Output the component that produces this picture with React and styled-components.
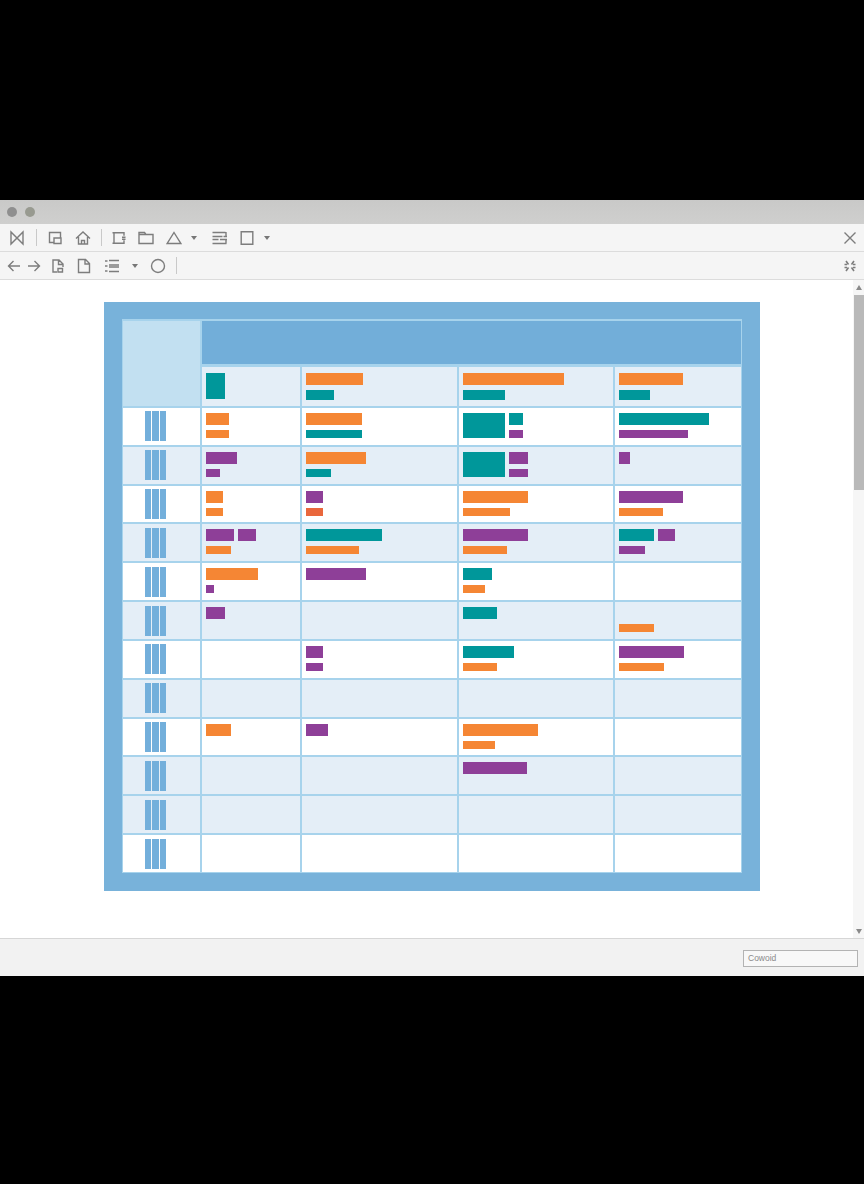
import React from "react";
import styled, { createGlobalStyle } from "styled-components";

const Global = createGlobalStyle`
  html, body { margin: 0; padding: 0; background: #000; }
  #root { height: 1184px; overflow: hidden; }
`;
const Page = styled.div`
  height: 1184px; box-sizing: border-box; padding-top: 200px; background: #000;
  font-family: "Liberation Sans", Arial, sans-serif;
`;
const Win = styled.div`
  height: 776px; display: flex; flex-direction: column; background: #fff;
`;
const TitleBar = styled.div`
  height: 24px; flex: none; display: flex; align-items: center; gap: 8px; padding-left: 7px;
  box-sizing: border-box; background: linear-gradient(#c9c9c8, #cfcfce);
`;
const Dot = styled.span`
  width: 10px; height: 10px; border-radius: 50%; background: ${p => p.$c};
`;
const Toolbar = styled.div`
  height: 28px; flex: none; box-sizing: border-box; display: flex; align-items: center;
  padding: 0 6px 0 ${p => p.$pad}px; background: #f5f5f5; border-bottom: 1.5px solid #dcdcdc;
`;
const Slot = styled.span`
  flex: none; width: ${p => p.$w || 16}px; height: 20px; margin-left: ${p => p.$ml || 0}px;
  display: flex; align-items: center; justify-content: center; color: #7d7d7d;
`;
const EndSlot = styled(Slot)`margin-left: auto;`;
const Sep = styled.span`
  flex: none; width: 1px; height: 17px; background: #c9c9c9; margin-left: ${p => p.$ml}px;
`;
const Caret = styled.span`
  width: 0; height: 0; border-left: 3.5px solid transparent; border-right: 3.5px solid transparent;
  border-top: 4px solid #777;
`;
const Glyph = styled.svg`
  flex: none; width: 16px; height: 16px; fill: none; stroke: currentColor; stroke-width: 1.4;
`;
const SmallGlyph = styled(Glyph)`
  width: 12px; height: 12px; stroke-width: 1.6;
`;
const Body = styled.div`
  flex: 1; min-height: 0; display: flex; background: #fff;
`;
const Canvas = styled.div`
  flex: 1; padding: 22px 93px 0 104px;
`;
const Frame = styled.div`
  width: 656px; height: 589px; box-sizing: border-box; padding: 17px 18px 18px 18px; background: #78b2da;
`;
const Table = styled.div`
  height: 100%; display: grid; background: #a7d3ec; gap: 2px; padding: 2px 1px 1px 1px; box-sizing: border-box;
  grid-template-columns: 77px 98px 155px 154px 1fr;
  grid-template-rows: 44px 39px repeat(12, 1fr);
`;
const Corner = styled.div`
  grid-row: 1 / span 2; background: #c2e0f1;
`;
const Banner = styled.div`
  grid-column: 2 / span 4; background: #72aed9; border-bottom: 1px solid #a7d3ec;
`;
const Cell = styled.div`
  background: ${p => (p.$tint ? "#e4eef7" : "#fff")};
  padding: ${p => p.$top}px 4px 0 4px; min-width: 0;
  display: flex; flex-direction: column; gap: 5px;
`;
const LabelCell = styled.div`
  background: ${p => (p.$tint ? "#e4eef7" : "#fff")};
  display: flex; justify-content: center; align-items: center; gap: 1px; padding-right: 12px;
`;
const Stripe = styled.span`
  width: 6.5px; height: 30px; background: #73afdb;
`;
const Line = styled.div`
  display: flex; gap: 4px; height: ${p => p.$h}px; flex: none;
`;
const Bar = styled.span`
  display: block; height: 100%; flex: none; width: ${p => p.$w}px; background: ${p => p.$c};
`;
const Pair = styled.div`
  display: flex; gap: 4px; flex: none;
`;
const Block = styled.span`
  display: block; flex: none; width: ${p => p.$w}px; height: ${p => p.$h}px; background: ${p => p.$c};
`;
const Stack = styled.div`
  display: flex; flex-direction: column; gap: 5px;
`;
const Scroll = styled.div`
  width: 11px; flex: none; background: #f6f6f6; display: flex; flex-direction: column; align-items: center;
  padding-top: 5px; padding-bottom: 4px; box-sizing: border-box;
`;
const ArrowUp = styled.span`
  width: 0; height: 0; border-left: 3.5px solid transparent; border-right: 3.5px solid transparent;
  border-bottom: 5px solid #8a8a8a; margin-bottom: 5px;
`;
const ArrowDown = styled.span`
  width: 0; height: 0; border-left: 3.5px solid transparent; border-right: 3.5px solid transparent;
  border-top: 5px solid #8a8a8a; margin-top: auto;
`;
const Thumb = styled.span`
  width: 10px; height: 195px; background: #b9b9b9;
`;
const Status = styled.div`
  height: 38px; flex: none; box-sizing: border-box; display: flex; align-items: center; justify-content: flex-end;
  padding: 0 6px 0 0; background: #f2f2f2; border-top: 1.5px solid #d6d6d6;
`;
const Field = styled.div`
  width: 115px; height: 17px; box-sizing: border-box; margin-top: 1px; padding-left: 4px;
  border: 1px solid #b3b3b3; background: #f8f8f8; color: #8a8a8a; font-size: 8.5px; line-height: 15px;
`;

const O = "#f58634", T = "#00979a", P = "#8e3f98", R = "#e9673c";

const rows = [
  { tint: 0, c: [[[O, 23], [O, 23]], [[O, 56], [T, 56]], { big: [T, 42], s: [T, 14, P, 14] }, [[T, 90], [P, 69]]] },
  { tint: 1, c: [[[P, 31], [P, 14]], [[O, 60], [T, 25]], { big: [T, 42], s: [P, 19, P, 19] }, [[P, 11]]] },
  { tint: 0, c: [[[O, 17], [O, 17]], [[P, 17], [R, 17]], [[O, 65], [O, 47]], [[P, 64], [O, 44]]] },
  { tint: 1, c: [[[P, 28, P, 18], [O, 25]], [[T, 76], [O, 53]], [[P, 65], [O, 44]], [[T, 35, P, 17], [P, 26]]] },
  { tint: 0, c: [[[O, 52], [P, 8]], [[P, 60]], [[T, 29], [O, 22]], []] },
  { tint: 1, c: [[[P, 19]], [], [[T, 34]], [[], [O, 35]]] },
  { tint: 0, c: [[], [[P, 17], [P, 17]], [[T, 51], [O, 34]], [[P, 65], [O, 45]]] },
  { tint: 1, c: [[], [], [], []] },
  { tint: 0, c: [[[O, 25]], [[P, 22]], [[O, 75], [O, 32]], []] },
  { tint: 1, c: [[], [], [[P, 64]], []] },
  { tint: 1, c: [[], [], [], []] },
  { tint: 0, c: [[], [], [], []] },
];

const BarCell = ({ cell, tint }) => {
  if (cell.big) {
    const [a, aw, b, bw] = cell.s;
    return (
      <Cell $tint={tint} $top={5}>
        <Pair>
          <Block $c={cell.big[0]} $w={cell.big[1]} $h={25} />
          <Stack>
            <Block $c={a} $w={aw} $h={12} />
            <Block $c={b} $w={bw} $h={8} />
          </Stack>
        </Pair>
      </Cell>
    );
  }
  return (
    <Cell $tint={tint} $top={5}>
      {cell.map((line, i) => (
        <Line key={i} $h={i === 0 ? 12 : 8}>
          {line[0] && <Bar $c={line[0]} $w={line[1]} />}
          {line[2] && <Bar $c={line[2]} $w={line[3]} />}
        </Line>
      ))}
    </Cell>
  );
};

const HeadCell = ({ lines }) => (
  <Cell $tint={1} $top={6}>
    {lines.map((l, i) => (
      <Line key={i} $h={i === 0 ? 12 : 10}>
        <Bar $c={l[0]} $w={l[1]} />
      </Line>
    ))}
  </Cell>
);

const Ic = ({ d }) => (
  <Glyph viewBox="0 0 16 16"><path d={d} /></Glyph>
);

export default function App() {
  return (
    <Page>
      <Global />
      <Win>
        <TitleBar>
          <Dot $c="#8f8f8f" />
          <Dot $c="#989a90" />
        </TitleBar>
        <Toolbar $pad={9}>
          <Slot><Ic d="M2 2v12l12-12v12z" /></Slot>
          <Sep $ml={11} />
          <Slot $ml={10}><Ic d="M7 12.5H2.5v-10h11V8M7 8h7v5.5H7z" /></Slot>
          <Slot $ml={12}><Ic d="M1 8.5 8 2l7 6.5M3.5 7v7h9V7M6.5 14v-3.5h3V14" /></Slot>
          <Sep $ml={10} />
          <Slot $ml={9}><Ic d="M1.5 2.8h3M3 2.8v10.4M1.5 13.2h3M4.5 2.8h8.5v3M4.5 13.2h8.5v-3M11 7.2h3.5M11 9.2h3.5" /></Slot>
          <Slot $ml={11}><Ic d="M1 13.5v-11h5.5L8 4.5h7v9zM1 4.5h7" /></Slot>
          <Slot $ml={12}><Ic d="M8 2.5 14.8 13.5H1.2z" /></Slot>
          <Slot $w={8} $ml={8}><Caret /></Slot>
          <Slot $ml={14}><Ic d="M.5 2.5h13M14 2v4M.5 6.5h10M11.5 6.5h3.5M.5 9.5h6M8 9.5h7M14 9.5v4M.5 13.5h14" /></Slot>
          <Slot $ml={11}><Ic d="M2.2 1.8h11.6v12.4H2.2z" /></Slot>
          <Slot $w={8} $ml={8}><Caret /></Slot>
          <EndSlot><Ic d="M2.5 2.5l11 11M13.5 2.5l-11 11" /></EndSlot>
        </Toolbar>
        <Toolbar $pad={6}>
          <Slot><Ic d="M14 8H2.5M7.5 3 2.5 8l5 5" /></Slot>
          <Slot $ml={4}><Ic d="M2 8h11.5M8.5 3l5 5-5 5" /></Slot>
          <Slot $ml={8}><Ic d="M7 14H3V2h6l4 4v3M8.5 2v4.5H13M8 10.5h4.5v3.5H8z" /></Slot>
          <Slot $ml={10}><Ic d="M2.5 14.5v-13h7l4 4v9zM9 1.5V6h4.5" /></Slot>
          <Slot $ml={12}><Ic d="M1 3h2.5M1 8h2.5M1 13h2.5M5 2.5h10M5 7h10M5 9h10M5 13.5h10" /></Slot>
          <Slot $w={8} $ml={11}><Caret /></Slot>
          <Slot $ml={11}><Glyph viewBox="0 0 16 16"><circle cx="8" cy="8" r="6.5" /></Glyph></Slot>
          <Sep $ml={10} />
          <EndSlot>
            <SmallGlyph viewBox="0 0 12 12">
              <path d="M2 1 4.5 4.5M10 1 7.5 4.5M2 11 4.5 7.5M10 11 7.5 7.5M.5 4.5h2.5M9 4.5h2.5M.5 7.5h2.5M9 7.5h2.5" />
            </SmallGlyph>
          </EndSlot>
        </Toolbar>
        <Body>
          <Canvas>
            <Frame>
              <Table>
                <Corner />
                <Banner />
                <Cell $tint={1} $top={6}>
                  <Block $c={T} $w={19} $h={26} />
                </Cell>
                <HeadCell lines={[[O, 57], [T, 28]]} />
                <HeadCell lines={[[O, 101], [T, 42]]} />
                <HeadCell lines={[[O, 64], [T, 31]]} />
                {rows.map((r, i) => (
                  <React.Fragment key={i}>
                    <LabelCell $tint={r.tint}>
                      <Stripe /><Stripe /><Stripe />
                    </LabelCell>
                    {r.c.map((c, j) => (
                      <BarCell key={j} cell={c} tint={r.tint} />
                    ))}
                  </React.Fragment>
                ))}
              </Table>
            </Frame>
          </Canvas>
          <Scroll>
            <ArrowUp />
            <Thumb />
            <ArrowDown />
          </Scroll>
        </Body>
        <Status>
          <Field>Cowoid</Field>
        </Status>
      </Win>
    </Page>
  );
}
